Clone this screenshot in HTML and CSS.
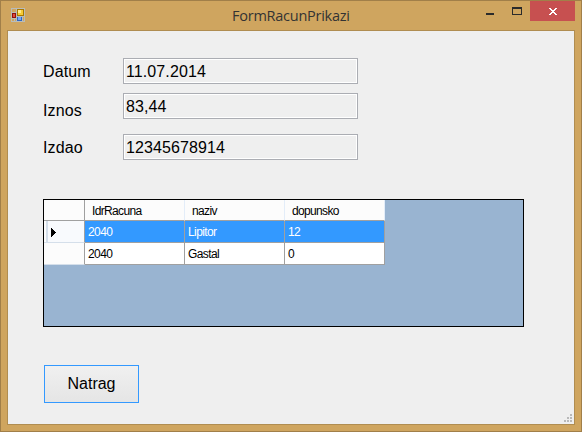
FILE: index.html
```html
<!DOCTYPE html>
<html lang="hr">
<head>
<meta charset="utf-8">
<title>FormRacunPrikazi</title>
<link rel="stylesheet" href="styles.css">
</head>
<body>
<div class="window">
  <header class="titlebar">
    <svg class="app-icon" width="14" height="14" viewBox="0 0 14 14" shape-rendering="crispEdges">
      <path fill="#b9bcba" d="M0 0h14v14H0z"/>
      <path fill="#cfa55f" d="M1 1h4v3H1zM1 11h2v2H1zM4 11h1v2H4zM12 9h1v4h-1z"/>
      <path fill="#8f1010" d="M1 5h4v5H1z"/>
      <path fill="#e04a3c" d="M2 6h2v3H2z"/>
      <path fill="#a87800" d="M6 1h7v7H6z"/>
      <path fill="#f6cb35" d="M7 2h5v5H7z"/>
      <path fill="#ffe98c" d="M7 2h3v3H7z"/>
      <path fill="#2f66c4" d="M6 9h5v4H6z"/>
      <path fill="#76a8f2" d="M7 9h3v3H7z"/>
    </svg>
    <h1 class="title">FormRacunPrikazi</h1>
    <div class="controls">
      <svg class="minimize" width="8" height="2"><path fill="#2b2b2b" d="M0 0h8v2H0z"/></svg>
      <svg class="maximize" width="10" height="8" shape-rendering="crispEdges"><path fill="#2b2b2b" fill-rule="evenodd" d="M0 0h10v8H0zM1 2v5h8V2z"/></svg>
      <div class="close">
        <svg width="8" height="7" shape-rendering="crispEdges"><path fill="#fff" d="M0 0h2v1H0zM6 0h2v1H6zM1 1h2v1H1zM5 1h2v1H5zM2 2h4v1H2zM3 3h2v1H3zM2 4h4v1H2zM1 5h2v1H1zM5 5h2v1H5zM0 6h2v1H0zM6 6h2v1H6z"/></svg>
      </div>
    </div>
  </header>
  <main class="client">
    <div class="field"><span class="label">Datum</span><span class="textbox">11.07.2014</span></div>
    <div class="field amount"><span class="label">Iznos</span><span class="textbox">83,44</span></div>
    <div class="field issuer"><span class="label">Izdao</span><span class="textbox">12345678914</span></div>
    <div class="datagrid">
      <div class="row head"><span class="selector"></span><span class="cell">IdrRacuna</span><span class="cell">naziv</span><span class="cell">dopunsko</span></div>
      <div class="row selected"><span class="selector current"><svg width="5" height="9" shape-rendering="crispEdges"><path d="M0 0h1v1h1v1h1v1h1v1h1v1H4v1H3v1H2v1H1v1H0z"/></svg></span><span class="cell">2040</span><span class="cell">Lipitor</span><span class="cell">12</span></div>
      <div class="row"><span class="selector"></span><span class="cell">2040</span><span class="cell">Gastal</span><span class="cell">0</span></div>
    </div>
    <button class="back">Natrag</button>
    <svg class="grip" width="8" height="8" shape-rendering="crispEdges"><path fill="#b9b9b9" d="M6 0h2v2H6zM3 3h2v2H3zM6 3h2v2H6zM0 6h2v2H0zM3 6h2v2H3zM6 6h2v2H6z"/></svg>
  </main>
</div>
</body>
</html>
```
FILE: styles.css
```css
* { box-sizing: border-box; }
body { margin: 0; font-family: "Liberation Sans", sans-serif; color: #000; }
svg { display: block; flex: none; }

.window {
  width: 582px;
  height: 432px;
  padding: 0 6px 6px;
  border: 1px solid #a17f49;
  background: #cfa55f;
}
.titlebar { display: flex; height: 29px; }
.app-icon { margin: 7px 0 0 4px; }
.title {
  flex: 1;
  margin: 5px 0 0 207px;
  font: 400 14.5px/20px "Open Sans", sans-serif;
  letter-spacing: -.25px;
  color: #333;
  white-space: nowrap;
}
.controls { display: flex; }
.minimize { margin: 12px 18px 0 0; }
.maximize { margin: 6px 8px 0 0; }
.close {
  display: flex;
  justify-content: center;
  width: 45px;
  height: 20px;
  padding-top: 7px;
  background: #c75050;
}

.client {
  position: relative;
  height: 395px;
  padding: 27px 0 0 35px;
  border: 1px solid #b08d51;
  background: #efefef;
}
.field { display: flex; height: 26px; font-size: 16px; letter-spacing: .1px; }
.amount { margin-top: 9px; }
.issuer { margin-top: 15px; }
.label { width: 80px; line-height: 27px; }
.amount .label { line-height: 36px; }
.textbox {
  width: 235px;
  padding-left: 2px;
  border: 1px solid #abadb3;
  box-shadow: inset 0 0 0 1px #fff;
  line-height: 25px;
}

.datagrid {
  width: 481px;
  height: 128px;
  margin-top: 39px;
  border: 1px solid #000;
  background: #99b4d1;
  font-size: 12px;
}
.row { display: flex; width: 341px; height: 22px; background: #fff; }
.selector {
  width: 41px;
  border-right: 1px solid #a0a0a0;
  border-bottom: 1px solid #d5dfea;
  background: #fcfcfc;
}
.cell {
  width: 100px;
  padding-left: 3px;
  border-right: 1px solid #a0a0a0;
  border-bottom: 1px solid #a0a0a0;
  line-height: 22px;
  letter-spacing: -.6px;
}
.head { height: 21px; background: #fcfcfc; }
.head .cell { padding-left: 7px; border-right-color: #e3edf9; letter-spacing: -.65px; }
.head .selector { border-bottom-color: #a0a0a0; }
.selected .cell { background: #39f; color: #fff; }
.current {
  padding: 7px 0 0 7px;
  background: #f8fafd;
  box-shadow: inset 2px 0 #fcfcfc, inset 4px 0 #d5dfea;
}

.back {
  display: block;
  width: 95px;
  height: 38px;
  margin: 38px 0 0 1px;
  padding: 0;
  border: 1px solid #39f;
  background: linear-gradient(#f0f0f0, #e5e5e5);
  font: 16px "Liberation Sans", sans-serif;
  color: #000;
}
.grip { position: absolute; right: 2px; bottom: 2px; }
```
